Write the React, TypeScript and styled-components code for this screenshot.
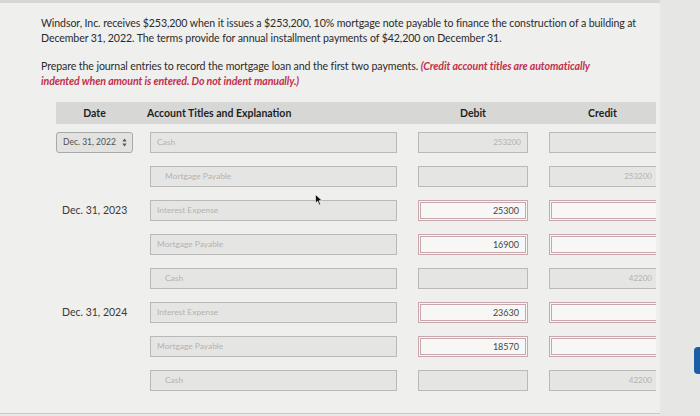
import React from 'react';
import styled, { createGlobalStyle } from 'styled-components';

const GlobalStyle = createGlobalStyle`
  html, body {
    margin: 0;
    padding: 0;
    background: #e9e9e7;
  }
  * {
    box-sizing: border-box;
  }
`;

const Page = styled.div`
  display: flex;
  width: 700px;
  height: 416px;
  overflow: hidden;
  font-family: Lato, 'Liberation Sans', sans-serif;
  background: #e9e9e7;
`;

const Panel = styled.div`
  width: 660px;
  height: 414px;
  padding: 13px 0 0 41px;
  background: #efefed;
  border-top: 3px solid #d6d6d4;
  border-bottom: 1px solid #c9c9c7;
`;

const SideStrip = styled.div`
  flex: 1;
  display: flex;
  flex-direction: column;
  align-items: flex-end;
  padding-top: 347px;
  background: #e6e6e4;
`;

const BlueTab = styled.div`
  width: 6px;
  height: 27px;
  background: #1d5da6;
  border-radius: 4px 0 0 4px;
`;

const Paragraph = styled.p`
  margin: 0 0 13px;
  font-size: 10.6px;
  line-height: 15px;
  color: #2b2b2b;
  white-space: nowrap;
  letter-spacing: -0.1px;
`;

const Note = styled.span`
  color: #c3304c;
  font-style: italic;
  font-weight: bold;
`;

const Table = styled.div`
  margin: 0 0 0 15px;
  width: 600px;
  position: relative;
  overflow: hidden;
`;

const columns = '94px 268px 131px 107px';

const HeaderRow = styled.div`
  display: grid;
  grid-template-columns: ${columns};
  align-items: center;
  height: 22px;
  background: #d7d7d5;
  font-size: 10.5px;
  font-weight: bold;
  color: #1f1f1f;
`;

type HeadProps = { $width: number };

const HeadCell = styled.div<HeadProps>`
  width: ${({ $width }) => $width}px;
  text-align: center;
`;

const AccountHead = styled.div`
  margin-left: -3px;
`;

const Rows = styled.div`
  padding-top: 1px;
`;

const Row = styled.div`
  display: grid;
  grid-template-columns: ${columns};
  align-items: center;
  height: 34px;
`;

const DateText = styled.div`
  padding-left: 6px;
  font-size: 10.5px;
  color: #3a3a3a;
`;

const DateSelect = styled.div`
  width: 77px;
  height: 21px;
  display: flex;
  align-items: center;
  justify-content: space-between;
  padding: 0 5px 0 6px;
  background: #e2e2e0;
  border: 1px solid #a9a9a9;
  border-radius: 3px;
  font-size: 8.5px;
  color: #505050;
`;

type FieldProps = { $active?: boolean; $indent?: boolean; $width: number };

const Field = styled.div<FieldProps>`
  width: ${({ $width }) => $width}px;
  height: 21px;
  display: flex;
  align-items: center;
  font-size: ${({ $active }) => ($active ? '9px' : '8px')};
  color: ${({ $active }) => ($active ? '#454545' : '#b3b3b1')};
  background: ${({ $active }) => ($active ? '#f7f7f6' : '#e5e5e3')};
  border: ${({ $active }) => ($active ? '3px double #c7a7ab' : '1px solid #b9b9b7')};
`;

const AccountField = styled(Field)<FieldProps>`
  padding-left: ${({ $indent }) => ($indent ? '14px' : '6px')};
  font-size: 8.4px;
`;

const AmountField = styled(Field)<FieldProps>`
  justify-content: flex-end;
  padding-right: 6px;
`;

const Pointer = styled.svg`
  position: absolute;
  left: 259px;
  top: 92px;
`;

type Entry = {
  date?: string;
  select?: boolean;
  account: string;
  indent?: boolean;
  debit?: string;
  credit?: string;
  active?: boolean;
};

const entries: Entry[] = [
  { date: 'Dec. 31, 2022', select: true, account: 'Cash', debit: '253200' },
  { account: 'Mortgage Payable', indent: true, credit: '253200' },
  { date: 'Dec. 31, 2023', account: 'Interest Expense', debit: '25300', active: true },
  { account: 'Mortgage Payable', debit: '16900', active: true },
  { account: 'Cash', indent: true, credit: '42200' },
  { date: 'Dec. 31, 2024', account: 'Interest Expense', debit: '23630', active: true },
  { account: 'Mortgage Payable', debit: '18570', active: true },
  { account: 'Cash', indent: true, credit: '42200' },
];

const SelectArrows = () => (
  <svg width="5" height="9" viewBox="0 0 5 9">
    <path d="M2.5 0.5 L4.6 3.6 H0.4 Z" fill="#555" />
    <path d="M2.5 8.5 L4.6 5.4 H0.4 Z" fill="#555" />
  </svg>
);

const App: React.FC = () => (
  <Page>
    <GlobalStyle />
    <Panel>
      <Paragraph>
        Windsor, Inc. receives $253,200 when it issues a $253,200, 10% mortgage note payable to finance the construction of a building at
        <br />
        December 31, 2022. The terms provide for annual installment payments of $42,200 on December 31.
      </Paragraph>
      <Paragraph>
        Prepare the journal entries to record the mortgage loan and the first two payments.{' '}
        <Note>
          (Credit account titles are automatically
          <br />
          indented when amount is entered. Do not indent manually.)
        </Note>
      </Paragraph>
      <Table>
        <HeaderRow>
          <HeadCell $width={77}>Date</HeadCell>
          <AccountHead>Account Titles and Explanation</AccountHead>
          <HeadCell $width={110}>Debit</HeadCell>
          <HeadCell $width={107}>Credit</HeadCell>
        </HeaderRow>
        <Rows>
          {entries.map((e, i) => (
            <Row key={i}>
              {e.select ? (
                <DateSelect>
                  {e.date}
                  <SelectArrows />
                </DateSelect>
              ) : (
                <DateText>{e.date}</DateText>
              )}
              <AccountField $width={247} $indent={e.indent}>
                {e.account}
              </AccountField>
              <AmountField $width={110} $active={e.active}>
                {e.debit}
              </AmountField>
              <AmountField $width={110} $active={e.active}>
                {e.credit}
              </AmountField>
            </Row>
          ))}
        </Rows>
        <Pointer width="8" height="12" viewBox="0 0 8 12">
          <path d="M0.5 0.5 L0.5 9 L2.6 7.2 L4.2 11 L5.6 10.4 L4 6.7 L7 6.6 Z" fill="#111" stroke="#fff" strokeWidth="0.6" />
        </Pointer>
      </Table>
    </Panel>
    <SideStrip>
      <BlueTab />
    </SideStrip>
  </Page>
);

export default App;
